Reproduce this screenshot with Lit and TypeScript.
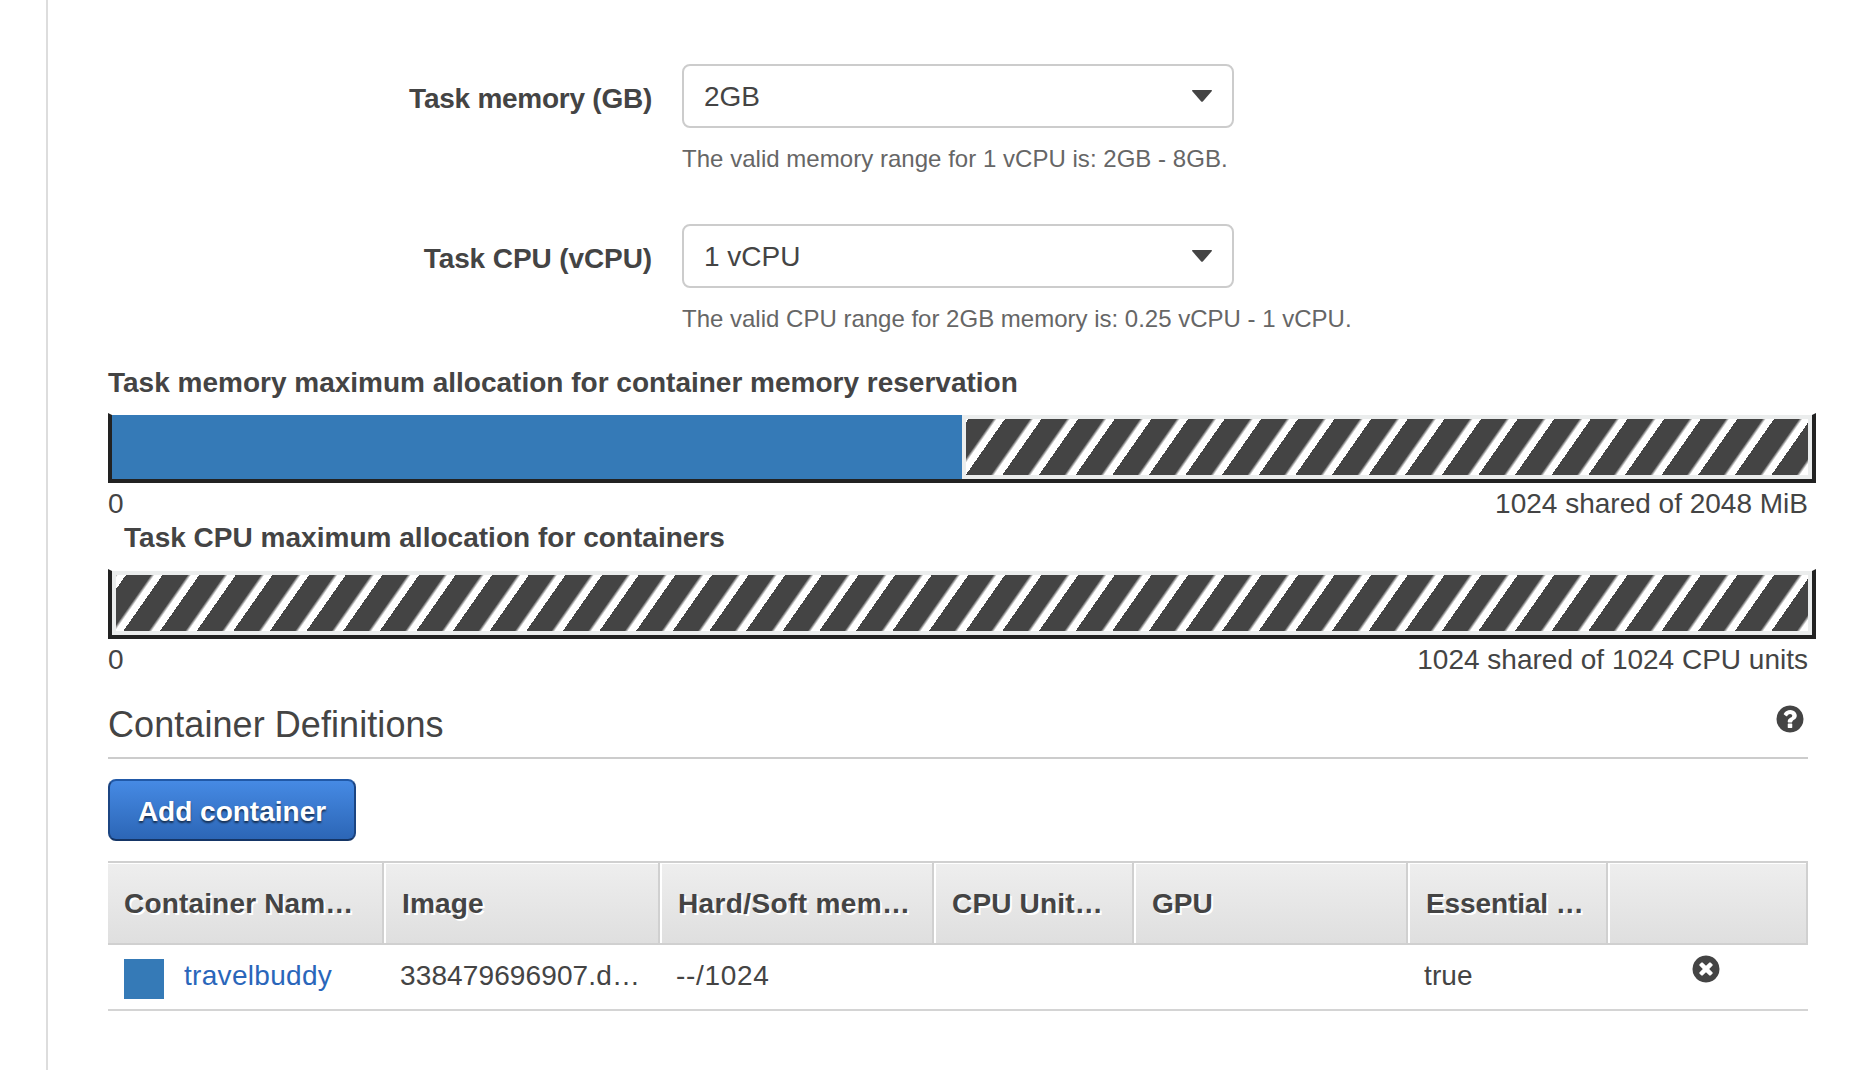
import { LitElement, html, css, svg } from "lit";
import { customElement, property } from "lit/decorators.js";

@customElement("select-field")
class SelectField extends LitElement {
  @property() label = "";
  @property() value = "";
  @property() hint = "";
  static styles = css`
    :host { display: grid; grid-template-columns: 652px 552px 1fr; column-gap: 30px; height: 160px; }
    .label { text-align: right; font-weight: 700; line-height: 32px; padding-top: 19px; white-space: nowrap; letter-spacing: var(--label-spacing, -0.1px); }
    .control { box-sizing: border-box; height: 64px; border: 2px solid #ccc; border-radius: 8px; display: flex;
      align-items: center; justify-content: space-between; padding: 0 20px; line-height: 32px; }
    .value { padding-top: 1px; }
    .hint { font-size: 24px; line-height: 28px; color: #666; white-space: nowrap; padding-top: 17px; letter-spacing: var(--hint-spacing, 0); }
    svg { display: block; }
  `;
  render() {
    return html`<div class="label">${this.label}</div>
      <div>
        <div class="control">
          <span class="value">${this.value}</span>
          <svg width="20" height="12" viewBox="0 0 20 12"><path d="M0.5 0h19q.8.6 0 1.6L10.8 11.4q-.8.7-1.6 0L.5 1.6Q-.3.6.5 0z" fill="#444"/></svg>
        </div>
        <div class="hint">${this.hint}</div>
      </div>`;
  }
}

@customElement("allocation-bar")
class AllocationBar extends LitElement {
  @property({ type: Number }) used = 0;
  @property() caption = "";
  static styles = css`
    :host { display: block; width: 1708px; }
    .bar { box-sizing: border-box; height: 70px; border: 4px solid #222; border-top: 2px solid transparent; display: flex; }
    .used { background: #357ab7; }
    .shared { box-sizing: border-box; flex: 1; border: 4px solid #ebeded;
      background: repeating-linear-gradient(-55deg, #fff 0, #fff 6.5px, #444 9.5px, #444 30px) padding-box; }
    .scale { box-sizing: border-box; display: flex; justify-content: space-between; width: 1700px; height: 36px; line-height: 32px; padding-top: 5px; }
  `;
  render() {
    return html`<div class="bar">
        <div class="used" style="width:${this.used}%"></div>
        <div class="shared"></div>
      </div>
      <div class="scale"><span>0</span><span>${this.caption}</span></div>`;
  }
}

const disc = "M1664 896q0 209-103 385.5t-279.5 279.5-385.5 103-385.5-103-279.5-279.5-103-385.5 103-385.5 279.5-279.5 385.5-103 385.5 103 279.5 279.5 103 385.5z";
const question = "M1024 1376v-192q0-14-9-23t-23-9h-192q-14 0-23 9t-9 23v192q0 14 9 23t23 9h192q14 0 23-9t9-23zM1280 704q0-88-55.5-163t-138.5-116-170-41q-243 0-371 213-15 24 8 42l132 100q7 6 19 6 16 0 25-12 53-68 86-92 34-24 86-24 48 0 85.5 26t37.5 59q0 38-20 61t-68 45q-63 28-115.5 86.5t-52.5 125.5v36q0 14 9 23t23 9h192q14 0 23-9t9-23q0-19 21.5-49.5t54.5-49.5q32-18 49-28.5t46-35 44.5-48 28-60.5 12.5-81z";
const times = "M1277 1122q0-26-19-45l-181-181 181-181q19-19 19-45 0-27-19-46l-90-90q-19-19-46-19-26 0-45 19l-181 181-181-181q-19-19-45-19-27 0-46 19l-90 90q-19 19-19 46 0 26 19 45l181 181-181 181q-19 19-19 45 0 27 19 46l90 90q19 19 46 19 26 0 45-19l181-181 181 181q19 19 45 19 27 0 46-19l90-90q19-19 19-46z";

const icon = (mark: string) => html`<svg class="icon" width="28" height="28" viewBox="100 100 1592 1592">
  ${svg`<path fill="#444" fill-rule="evenodd" d=${disc + mark}></path>`}</svg>`;

@customElement("app-root")
class AppRoot extends LitElement {
  static styles = css`
    :host { display: block; box-sizing: border-box; width: 1874px; height: 1070px; overflow: hidden; background: #fff;
      color: #444; font: 28px/32px "Liberation Sans", Arial, sans-serif; padding-left: 46px; }
    .panel { box-sizing: border-box; height: 1070px; border-left: 2px solid #ddd; padding: 64px 66px 0 60px; }
    select-field { margin-left: -108px; }
    .memory { --label-spacing: -0.25px; --hint-spacing: 0.03px; }
    .title { box-sizing: border-box; font-weight: 700; line-height: 32px; }
    .first { height: 46px; margin-top: -17px; }
    .second { height: 50px; padding: 3px 0 0 16px; letter-spacing: 0.02px; }
    .section { display: flex; justify-content: space-between; box-sizing: border-box; height: 84px; border-bottom: 2px solid #ccc; }
    h2 { margin: 0; font-weight: 400; font-size: 36px; line-height: 40px; padding-top: 30px; letter-spacing: 0.07px; }
    .section .icon { margin: 30px 4px 0 0; }
    .add { display: block; box-sizing: border-box; width: 248px; height: 62px; margin: 20px 0; padding: 3px 0 0; border: 2px solid;
      border-color: #2159a8 #1c4582 #153566; border-radius: 8px; background: linear-gradient(#468ae4, #2c66b6);
      color: #fff; font: 700 28px/32px "Liberation Sans", Arial, sans-serif; text-shadow: 0 2px 2px rgba(0,0,0,.6); }
    .row { display: grid; grid-template-columns: 276px 276px 274px 200px 274px 200px 200px; width: 1700px; box-sizing: border-box; }
    .head { height: 84px; border-top: 2px solid #d0d0d0; border-bottom: 2px solid #d0d0d0; }
    .th { box-sizing: border-box; border-right: 2px solid #d0d0d0; border-left: 2px solid #fff; padding: 25px 0 0 16px;
      background: linear-gradient(#eee, #dfdfdf); box-shadow: inset 0 1px #fff; font-weight: 700; line-height: 32px; text-shadow: 2px 2px #fff;
      white-space: nowrap; letter-spacing: 0.17px; }
    .th:first-child { border-left: 0; }
    .th:nth-child(3) { letter-spacing: 0.37px; }
    .th:nth-child(5) { letter-spacing: 0; }
    .th:nth-child(6) { letter-spacing: -0.1px; }
    .body { height: 66px; border-bottom: 2px solid #d4d4d4; }
    .td { padding: 15px 0 0 16px; display: flex; white-space: nowrap; letter-spacing: 0.12px; }
    .swatch { width: 40px; height: 40px; background: #357ab7; margin: -1px 20px 0 0; }
    .link { color: #2a66ba; letter-spacing: 0.3px; }
    .limits { letter-spacing: 0.7px; }
    .remove { padding: 10px 0 0 84px; }
  `;
  heads = ["Container Nam…", "Image", "Hard/Soft mem…", "CPU Unit…", "GPU", "Essential …", ""];
  render() {
    return html`<div class="panel">
      <select-field class="memory" label="Task memory (GB)" value="2GB" hint="The valid memory range for 1 vCPU is: 2GB - 8GB."></select-field>
      <select-field label="Task CPU (vCPU)" value="1 vCPU" hint="The valid CPU range for 2GB memory is: 0.25 vCPU - 1 vCPU."></select-field>
      <div class="title first">Task memory maximum allocation for container memory reservation</div>
      <allocation-bar used="50" caption="1024 shared of 2048 MiB"></allocation-bar>
      <div class="title second">Task CPU maximum allocation for containers</div>
      <allocation-bar used="0" caption="1024 shared of 1024 CPU units"></allocation-bar>
      <div class="section"><h2>Container Definitions</h2>${icon(question)}</div>
      <button class="add">Add container</button>
      <div class="row head">${this.heads.map((h) => html`<div class="th">${h}</div>`)}</div>
      <div class="row body">
        <div class="td"><span class="swatch"></span><span class="link">travelbuddy</span></div>
        <div class="td">338479696907.d…</div>
        <div class="td limits">--/1024</div>
        <div class="td"></div>
        <div class="td"></div>
        <div class="td">true</div>
        <div class="td remove">${icon(times)}</div>
      </div>
    </div>`;
  }
}
